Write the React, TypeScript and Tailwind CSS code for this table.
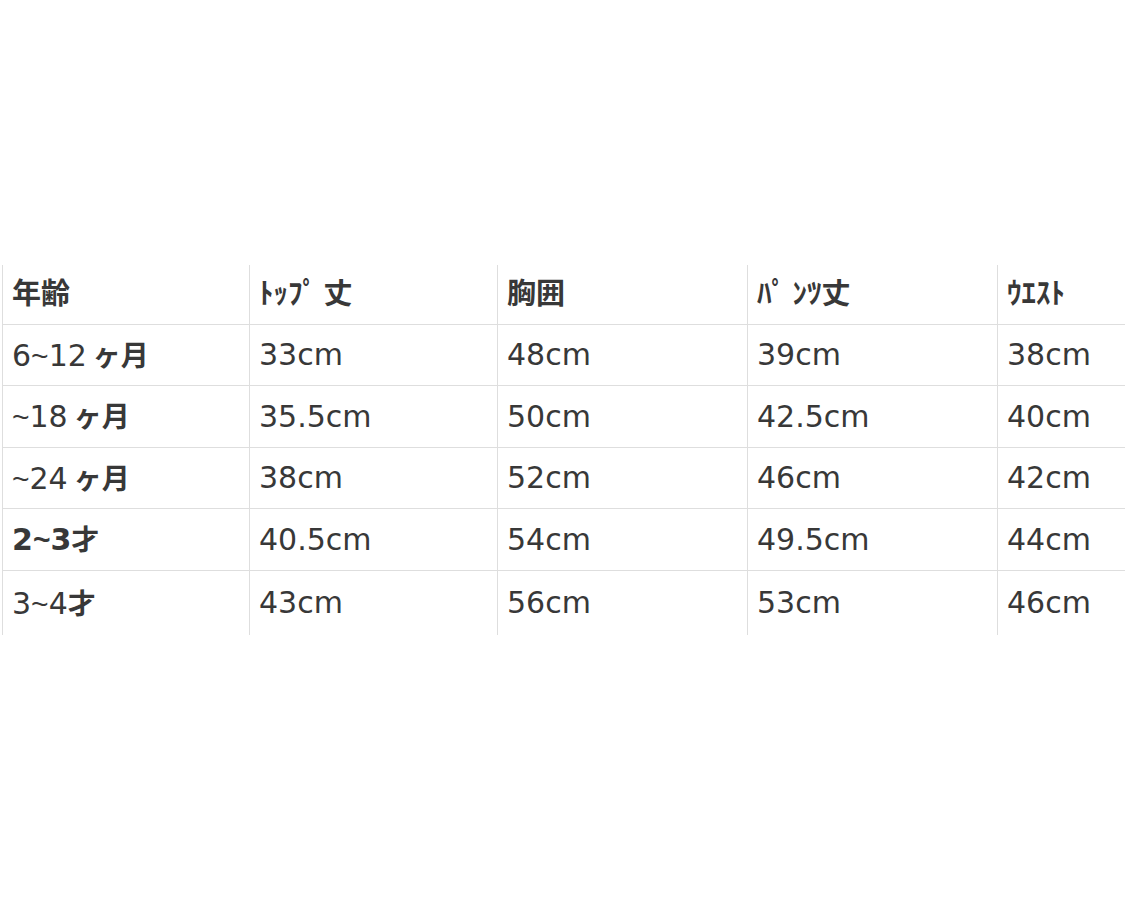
const headers = ["年齢", "ﾄｯﾌﾟ 丈", "胸囲", "ﾊﾟ ﾝﾂ丈", "ｳｴｽﾄ"]

const rows: { cells: string[]; bold?: boolean; h: string }[] = [
  { cells: ["6~12 ヶ月", "33cm", "48cm", "39cm", "38cm"], h: "h-[61px]" },
  { cells: ["~18 ヶ月", "35.5cm", "50cm", "42.5cm", "40cm"], h: "h-[62px]" },
  { cells: ["~24 ヶ月", "38cm", "52cm", "46cm", "42cm"], h: "h-[61px]" },
  { cells: ["2~3才", "40.5cm", "54cm", "49.5cm", "44cm"], h: "h-[62px]", bold: true },
  { cells: ["3~4才", "43cm", "56cm", "53cm", "46cm"], h: "h-[64px]" },
]

const cols = "grid grid-cols-[247px_248px_250px_250px_250px]"
const cjk = { fontFamily: '"Noto Sans CJK JP", sans-serif' }
const tilde = { fontFamily: '"Liberation Sans", sans-serif' }

// split a label into latin / tilde / japanese runs so each gets its own face
function Label({ text, bold }: { text: string; bold?: boolean }) {
  const parts = text.split(/([\u3000-\u9fff]+|~)/).filter(Boolean)
  return (
    <span className={`text-[30px] leading-none whitespace-pre ${bold ? "font-bold" : ""}`}>
      {parts.map((p, i) =>
        /[\u3000-\u9fff]/.test(p) ? (
          <span key={i} className="font-bold text-[28px]" style={cjk}>
            {p}
          </span>
        ) : p === "~" ? (
          <span key={i} style={tilde}>
            {p}
          </span>
        ) : (
          <span key={i}>{p.replace(" ", "\u2009")}</span>
        )
      )}
    </span>
  )
}

export default function App() {
  return (
    <div
      className="w-[1125px] h-[900px] bg-white overflow-hidden pt-[265px] pl-[2px] text-[#383838]"
      style={{ fontFamily: '"DejaVu Sans", "Noto Sans CJK JP", sans-serif' }}
    >
      <div className={`${cols} h-[60px] border-b border-[#dedede]`}>
        {headers.map((h) => (
          <div key={h} className="border-l border-[#dedede] pl-[9px] flex items-center">
            <span className="text-[29px] font-bold leading-none pb-[6px]" style={cjk}>
              {h}
            </span>
          </div>
        ))}
      </div>
      {rows.map((r, i) => (
        <div key={i} className={`${cols} ${r.h} ${i < rows.length - 1 ? "border-b border-[#dedede]" : ""}`}>
          {r.cells.map((c, j) => (
            <div key={j} className="border-l border-[#dedede] pl-[9px] flex items-center">
              <Label text={c} bold={r.bold && j === 0} />
            </div>
          ))}
        </div>
      ))}
    </div>
  )
}
